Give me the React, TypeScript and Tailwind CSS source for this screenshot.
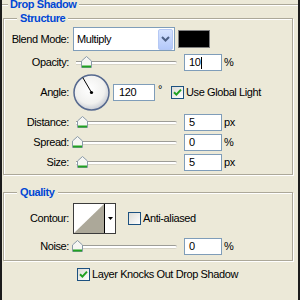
import { FC, ReactNode } from "react";

const Thumb: FC<{ className: string }> = ({ className }) => (
  <svg className={`absolute top-[2px] ${className}`} width="11" height="12" viewBox="0 0 11 12">
    <path d="M0.5 11.5V5L5.5 0.5L10.5 5V11.5Z" fill="#F6F6F3" stroke="#8A9AA8" />
    <rect x="1" y="9.5" width="9" height="2" fill="#21A121" />
  </svg>
);

const Slider: FC<{ thumb: string }> = ({ thumb }) => (
  <div className="relative ml-[3px] h-[17px] w-[106px]">
    <div className="ml-[4px] mt-[7px] h-[4px] w-[101px] rounded-r-[2px] border-y border-t-[#9D9D97] border-b-[#D6D3C6] bg-white" />
    <Thumb className={thumb} />
  </div>
);

const Field: FC<{ children: ReactNode; className?: string }> = ({ children, className = "ml-[6px] w-[38px] pl-[4px]" }) => (
  <div className={`flex h-[17px] items-center border border-[#7F9DB9] bg-white ${className}`}>{children}</div>
);

const Label: FC<{ children: ReactNode }> = ({ children }) => (
  <div className="w-[65px] text-right">{children}</div>
);

const Checkbox: FC<{ checked?: boolean }> = ({ checked }) => (
  <div className="flex h-[13px] w-[13px] items-center justify-center border border-[#1C5180] bg-gradient-to-br from-[#DCDCD7] to-white">
    {checked && (
      <svg width="9" height="9" viewBox="0 0 9 9">
        <path d="M1 4.2L3.4 6.6L8 1.6" fill="none" stroke="#21A121" strokeWidth="2" />
      </svg>
    )}
  </div>
);

const Dial = () => (
  <svg width="37" height="37" viewBox="0 0 37 37" className="ml-[4px]">
    <defs>
      <radialGradient id="dial" cx="45%" cy="40%" r="60%">
        <stop offset="0%" stopColor="#FFFFFF" />
        <stop offset="70%" stopColor="#F1F1EF" />
        <stop offset="100%" stopColor="#C8CCD4" />
      </radialGradient>
    </defs>
    <circle cx="18.5" cy="18.5" r="17.5" fill="url(#dial)" stroke="#56698F" strokeWidth="1.5" />
    <line x1="18.5" y1="18.5" x2="9.8" y2="3.6" stroke="#000" strokeWidth="1" />
    <circle cx="18.5" cy="18.5" r="1.6" fill="#000" />
  </svg>
);

const Group: FC<{ title: string; className: string; children: ReactNode }> = ({ title, className, children }) => (
  <fieldset
    className={`ml-[1px] w-[290px] border border-[#ACA899] shadow-[inset_1px_1px_0_#fff,1px_1px_0_#fff] ${className}`}
  >
    <legend className="ml-[13px] bg-[#ECE9D8] px-[3px] font-bold text-[#0046D5]">{title}</legend>
    {children}
  </fieldset>
);

export default function App() {
  return (
    <div className="h-[300px] w-[300px] overflow-hidden border-x-2 border-[#1B1B1B] bg-[#ECE9D8] font-['Liberation_Sans',Arial,sans-serif] text-[11px] leading-[13px] tracking-[-0.4px] text-black">
      <fieldset className="-mt-[2px] border-t border-[#ACA899] shadow-[inset_0_1px_0_#fff]">
        <legend className="ml-[6px] bg-[#ECE9D8] px-[2px] font-bold text-[#0046D5]">Drop Shadow</legend>

        <Group title="Structure" className="mt-[1px]">
          <div className="flex flex-col pb-[3px] pt-[2px]">
            <div className="flex h-[24px] items-center">
              <Label>Blend Mode:</Label>
              <div className="ml-[4px] flex h-[24px] w-[102px] items-center border border-[#7F9DB9] bg-white">
                <span className="flex-1 pl-[3px]">Multiply</span>
                <div className="mr-[1px] flex h-[21px] w-[15px] items-center justify-center rounded-[2px] border border-[#B5C8F4] bg-gradient-to-b from-[#D6E3FE] to-[#B4C9FA]">
                  <svg width="9" height="6" viewBox="0 0 9 6">
                    <path d="M1 1L4.5 4.5L8 1" fill="none" stroke="#4D6185" strokeWidth="2" />
                  </svg>
                </div>
              </div>
              <div className="ml-[3px] h-[18px] w-[32px] border border-[#808080] bg-black" />
            </div>

            <div className="mt-[3px] flex h-[17px] items-center">
              <Label>Opacity:</Label>
              <Slider thumb="left-[9px]" />
              <Field>
                10<span className="ml-[1px] h-[12px] w-px bg-black" />
              </Field>
              <span className="ml-[2px]">%</span>
            </div>

            <div className="mt-[3px] flex h-[37px] items-center">
              <Label>Angle:</Label>
              <Dial />
              <Field className="ml-[3px] w-[42px] pl-[5px]">120</Field>
              <span className="ml-[3px] w-[13px] self-start pt-[9px]">°</span>
              <Checkbox checked />
              <span className="ml-[2px]">Use Global Light</span>
            </div>

            <div className="mt-[3px] flex h-[17px] items-center">
              <Label>Distance:</Label>
              <Slider thumb="left-[5px]" />
              <Field>5</Field>
              <span className="ml-[2px]">px</span>
            </div>

            <div className="mt-[3px] flex h-[17px] items-center">
              <Label>Spread:</Label>
              <Slider thumb="left-0" />
              <Field>0</Field>
              <span className="ml-[2px]">%</span>
            </div>

            <div className="mt-[3px] flex h-[17px] items-center">
              <Label>Size:</Label>
              <Slider thumb="left-[5px]" />
              <Field>5</Field>
              <span className="ml-[2px]">px</span>
            </div>
          </div>
        </Group>

        <Group title="Quality" className="mt-[11px]">
          <div className="flex flex-col pb-[5px] pt-[4px]">
            <div className="flex h-[31px] items-center">
              <Label>Contour:</Label>
              <div className="ml-[4px] flex h-[31px] w-[43px] border border-[#3C3C3C] bg-white">
                <svg width="30" height="29" viewBox="0 0 30 29">
                  <path d="M0 29L30 0V29Z" fill="#ACA899" />
                </svg>
                <div className="flex flex-1 items-center justify-center border-l border-black">
                  <svg width="5" height="3" viewBox="0 0 5 3">
                    <path d="M0 0H5L2.5 3Z" fill="#000" />
                  </svg>
                </div>
              </div>
              <div className="ml-[12px]">
                <Checkbox />
              </div>
              <span className="ml-[2px]">Anti-aliased</span>
            </div>

            <div className="mt-[4px] flex h-[17px] items-center">
              <Label>Noise:</Label>
              <Slider thumb="left-0" />
              <Field>0</Field>
              <span className="ml-[2px]">%</span>
            </div>
          </div>
        </Group>

        <div className="ml-[75px] mt-[7px] flex items-center">
          <Checkbox checked />
          <span className="ml-[2px]">Layer Knocks Out Drop Shadow</span>
        </div>
      </fieldset>
    </div>
  );
}
